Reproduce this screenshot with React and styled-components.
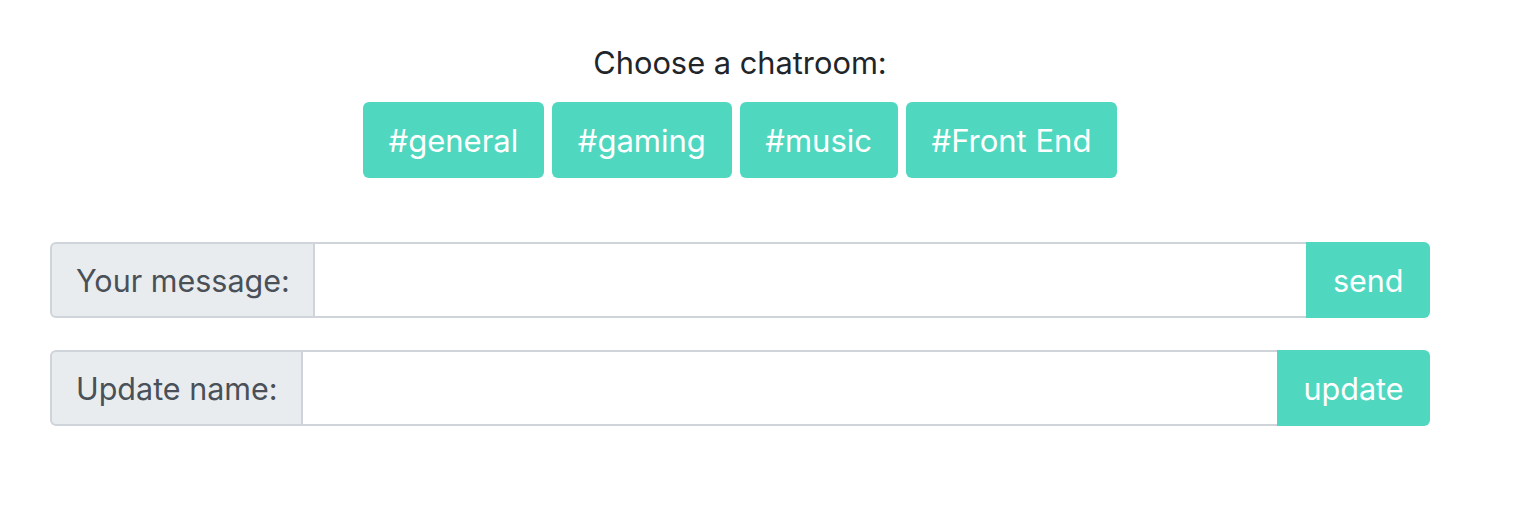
import React from "react";
import styled, { createGlobalStyle } from "styled-components";

const Global = createGlobalStyle`
  html, body { margin: 0; padding: 0; background: #fff; }
  body { font-family: Inter, "Noto Sans", sans-serif; color: #212529; }
  * { box-sizing: border-box; }
`;

const TEAL = "#4fd8bf";

const Page = styled.div`
  width: 1380px;
  margin-left: 50px;
  padding-top: 42px;
  display: flex;
  flex-direction: column;
`;

const Title = styled.h2`
  margin: 0;
  text-align: center;
  font-size: 30.8px;
  font-weight: 400;
  line-height: 42px;
  color: #212529;
`;

const RoomRow = styled.div`
  display: flex;
  justify-content: center;
  gap: 8px;
  margin-top: 18px;
`;

const RoomButton = styled.button`
  height: 76px;
  padding: 0 25.75px;
  border: none;
  border-radius: 6px;
  background: ${TEAL};
  color: #fff;
  font-family: inherit;
  font-size: 31px;
  line-height: 1;
  cursor: pointer;
`;

const Forms = styled.div`
  display: flex;
  flex-direction: column;
  gap: 32px;
  margin-top: 64px;
`;

const InputGroup = styled.div`
  display: flex;
  height: 76px;
`;

const Label = styled.span`
  display: flex;
  align-items: center;
  padding: 0 23px 0 24px;
  background: #e9ecef;
  border: 2px solid #ced4da;
  border-radius: 6px 0 0 6px;
  color: #495057;
  font-size: 30.5px;
  white-space: nowrap;
`;

const Field = styled.input`
  flex: 1;
  min-width: 0;
  border: 2px solid #ced4da;
  border-left: none;
  border-right: none;
  outline: none;
  font-family: inherit;
  font-size: 30px;
  padding: 0 20px;
  background: #fff;
`;

const ActionButton = styled.button`
  padding: 0 26.5px;
  border: none;
  border-radius: 0 6px 6px 0;
  background: ${TEAL};
  color: #fff;
  font-family: inherit;
  font-size: 30.5px;
  cursor: pointer;
`;

export default function App() {
  const rooms = ["#general", "#gaming", "#music", "#Front End"];
  return (
    <>
      <Global />
      <Page>
        <Title>Choose a chatroom:</Title>
        <RoomRow>
          {rooms.map((r) => (
            <RoomButton key={r}>{r}</RoomButton>
          ))}
        </RoomRow>
        <Forms>
          <InputGroup>
            <Label>Your message:</Label>
            <Field type="text" />
            <ActionButton>send</ActionButton>
          </InputGroup>
          <InputGroup>
            <Label>Update name:</Label>
            <Field type="text" />
            <ActionButton>update</ActionButton>
          </InputGroup>
        </Forms>
      </Page>
    </>
  );
}
